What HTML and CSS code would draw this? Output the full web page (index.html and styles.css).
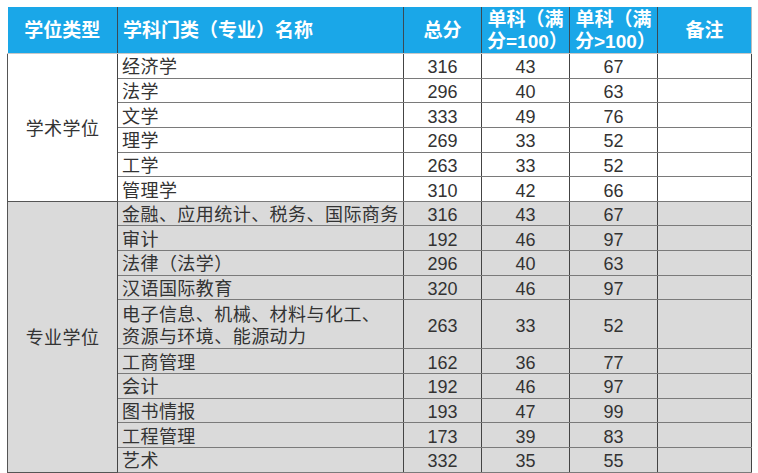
FILE: index.html
```html
<!DOCTYPE html>
<html lang="zh">
<head>
<meta charset="utf-8">
<link rel="stylesheet" href="styles.css">
</head>
<body>
<div class="wrap">
<table class="score">
  <colgroup>
    <col class="c1"><col class="c2"><col class="c3"><col class="c4"><col class="c5"><col class="c6">
  </colgroup>
  <thead>
    <tr>
      <th>学位类型</th>
      <th class="left">学科门类（专业）名称</th>
      <th>总分</th>
      <th>单科（满分=100）</th>
      <th>单科（满分&gt;100）</th>
      <th>备注</th>
    </tr>
  </thead>
  <tbody class="academic">
    <tr><td class="type" rowspan="6">学术学位</td><td class="name">经济学</td><td>316</td><td>43</td><td>67</td><td></td></tr>
    <tr><td class="name">法学</td><td>296</td><td>40</td><td>63</td><td></td></tr>
    <tr><td class="name">文学</td><td>333</td><td>49</td><td>76</td><td></td></tr>
    <tr><td class="name">理学</td><td>269</td><td>33</td><td>52</td><td></td></tr>
    <tr><td class="name">工学</td><td>263</td><td>33</td><td>52</td><td></td></tr>
    <tr><td class="name">管理学</td><td>310</td><td>42</td><td>66</td><td></td></tr>
  </tbody>
  <tbody class="pro">
    <tr><td class="type" rowspan="11">专业学位</td><td class="name">金融、应用统计、税务、国际商务</td><td>316</td><td>43</td><td>67</td><td></td></tr>
    <tr><td class="name">审计</td><td>192</td><td>46</td><td>97</td><td></td></tr>
    <tr><td class="name">法律（法学）</td><td>296</td><td>40</td><td>63</td><td></td></tr>
    <tr><td class="name">汉语国际教育</td><td>320</td><td>46</td><td>97</td><td></td></tr>
    <tr class="double"><td class="name">电子信息、机械、材料与化工、<br>资源与环境、能源动力</td><td>263</td><td>33</td><td>52</td><td></td></tr>
    <tr><td class="name">工商管理</td><td>162</td><td>36</td><td>77</td><td></td></tr>
    <tr><td class="name">会计</td><td>192</td><td>46</td><td>97</td><td></td></tr>
    <tr><td class="name">图书情报</td><td>193</td><td>47</td><td>99</td><td></td></tr>
    <tr><td class="name">工程管理</td><td>173</td><td>39</td><td>83</td><td></td></tr>
    <tr><td class="name">艺术</td><td>332</td><td>35</td><td>55</td><td></td></tr>
  </tbody>
</table>
<div class="strip"></div>
</div>
</body>
</html>
```

FILE: styles.css
```css
html, body {
  margin: 0;
  padding: 0;
  background: #ffffff;
}

.wrap {
  padding: 7px 0 0 7px;
}

.score {
  border-collapse: collapse;
  table-layout: fixed;
  width: 744px;
  font-family: "Liberation Sans", "Noto Sans CJK SC", sans-serif;
  font-size: 18px;
  color: #333333;
}

.c1 { width: 110px; }
.c2 { width: 286px; }
.c3 { width: 78px; }
.c4 { width: 88px; }
.c5 { width: 88px; }
.c6 { width: 94px; }

.score th {
  background: #1aa7e8;
  color: #ffffff;
  font-weight: bold;
  font-size: 19px;
  line-height: 22px;
  height: 46px;
  padding: 2px 5px 0;
  text-align: center;
  border-left: 1px solid #3a4a55;
  border-right: 1px solid #3a4a55;
  border-top: none;
  border-bottom: 1px solid #c8c8c8;
  box-sizing: border-box;
}

.score th:first-child {
  border-left: none;
}

.score th:last-child {
  border-right: 1px solid #bbbbbb;
}

.score th.left {
  text-align: left;
}

.score td {
  height: 24.65px;
  padding: 3px 4px 0;
  text-align: center;
  line-height: 20px;
  border-left: 1px solid #444444;
  border-right: 1px solid #444444;
  border-top: 1px solid #7a7a7a;
  border-bottom: 1px solid #7a7a7a;
  box-sizing: border-box;
}

.score tr.double td {
  height: 49px;
  line-height: 22px;
}

.score td.name {
  text-align: left;
  padding-left: 4px;
  white-space: nowrap;
  letter-spacing: 0.45px;
}

.score td.type {
  letter-spacing: 0.4px;
  border-left: 1px solid #555555;
  border-bottom: 1px solid #555555;
}

.academic td {
  background: #ffffff;
}

.pro td {
  background: #dadada;
}

.strip {
  width: 716px;
  height: 3px;
  background: linear-gradient(to right, #b9895e, #c78a52 60%, #c9935f);
}
```
